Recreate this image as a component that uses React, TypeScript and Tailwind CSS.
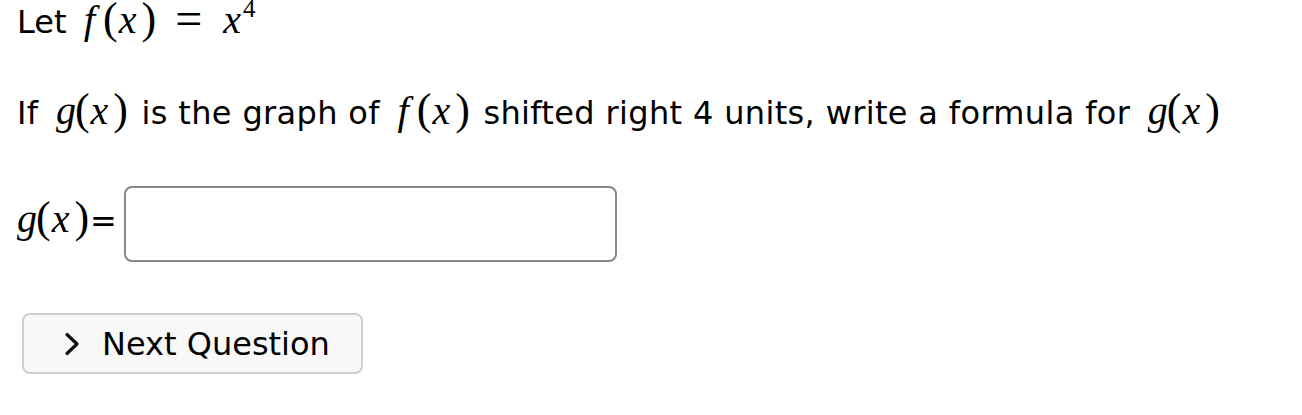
import React from 'react';

const sans = { fontFamily: '"DejaVu Sans", Verdana, sans-serif' };

// MathJax-like inline function call, e.g. g(x)
function Fx({ name }: { name: 'f' | 'g' }) {
  return (
    <span className="font-['Liberation_Serif',serif] tracking-normal leading-[34px] whitespace-nowrap ml-[7px] mr-[3px]">
      <i className={name === 'f' ? 'text-[41px]' : 'text-[40px]'}>{name}</i>
      <span className={name === 'f' ? 'text-[44px] ml-[8px]' : 'text-[44px] -ml-[1px]'}>(</span>
      <i className="text-[40px] ml-[1px]">x</i>
      <span className="text-[44px] ml-[5px]">)</span>
    </span>
  );
}

export default function App() {
  return (
    <div className="bg-white text-black min-h-screen pl-[17px]" style={sans}>
      <p className="text-[32px] leading-[42px] whitespace-nowrap">
        Let <Fx name="f" />
        <span className="font-['Liberation_Serif',serif] leading-[34px] text-[48px] ml-[16px] relative top-[2px]">=</span>
        <i className="font-['Liberation_Serif',serif] leading-[34px] text-[40px] ml-[21px]">x</i>
        <span className="font-['Liberation_Serif',serif] leading-[20px] text-[25px] relative -top-[16px] ml-[2px]">4</span>
      </p>
      <p className="text-[32px] leading-[42px] tracking-[0.35px] mt-[49px] whitespace-nowrap">
        If <Fx name="g" /> is the graph of <Fx name="f" /> shifted right 4 units, write a formula for <Fx name="g" />
      </p>
      <div className="flex items-center mt-[52px]">
        <span className="text-[32px] leading-[42px] pb-[7px] whitespace-nowrap">
          <span className="-ml-[7px]">
            <Fx name="g" />
          </span>
          <span className="-ml-[2px]">=</span>
        </span>
        <input
          type="text"
          className="ml-[7px] w-[493px] h-[76px] border-2 border-[#878787] rounded-[8px] bg-white outline-none"
        />
      </div>
      <button className="mt-[51px] ml-[5px] w-[341px] h-[61px] border-2 border-[#cfcfcf] rounded-[8px] bg-[#f8f8f8] flex items-center pl-[40px] gap-[22px] text-[32px]">
        <svg width="16" height="26" viewBox="0 0 16 26" fill="none">
          <path d="M3 3.5 L13 13 L3 22.5" stroke="#111" strokeWidth="3.2" strokeLinecap="round" strokeLinejoin="round" />
        </svg>
        <span className="leading-none">Next Question</span>
      </button>
    </div>
  );
}
